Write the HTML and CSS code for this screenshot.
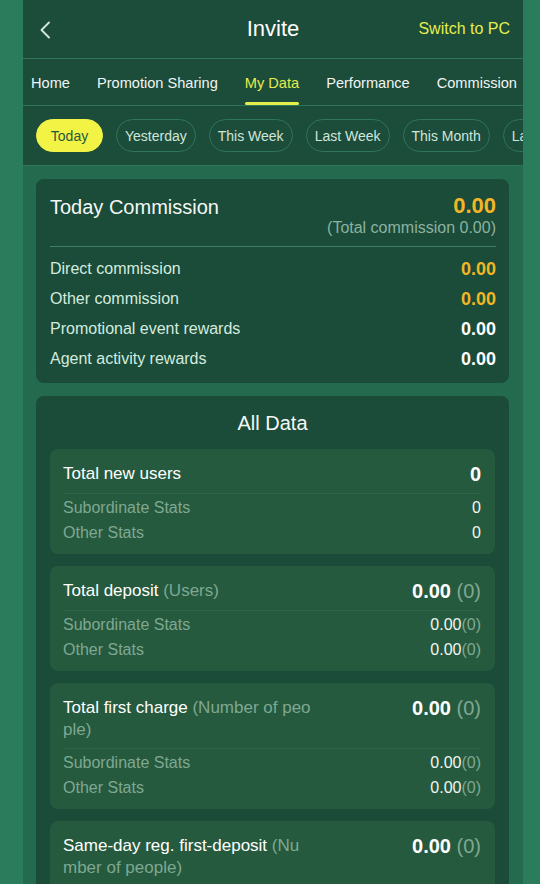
FILE: index.html
```html
<!DOCTYPE html>
<html lang="en">
<head>
<meta charset="utf-8">
<title>Invite</title>
<link rel="stylesheet" href="styles.css">
</head>
<body>
<div class="app">
  <header class="topbar">
    <span class="back">
      <svg width="12" height="18" viewBox="0 0 12 18"><polyline points="10,1.5 2.5,9 10,16.5" fill="none" stroke="#d6e9df" stroke-width="1.8" stroke-linecap="round" stroke-linejoin="round"/></svg>
    </span>
    <h1 class="title">Invite</h1>
    <span class="switch">Switch to PC</span>
  </header>

  <nav class="tabs">
    <span class="tab">Home</span>
    <span class="tab">Promotion Sharing</span>
    <span class="tab active">My Data</span>
    <span class="tab">Performance</span>
    <span class="tab">Commission</span>
  </nav>

  <div class="periods">
    <span class="pill on">Today</span>
    <span class="pill">Yesterday</span>
    <span class="pill">This Week</span>
    <span class="pill">Last Week</span>
    <span class="pill">This Month</span>
    <span class="pill">Last Month</span>
  </div>

  <main class="content">
    <section class="card commission">
      <div class="comm-head">
        <div class="comm-title">Today Commission</div>
        <div class="comm-total">
          <div class="amount gold">0.00</div>
          <div class="total-note">(Total commission 0.00)</div>
        </div>
      </div>
      <div class="comm-rows">
        <div class="comm-row"><span>Direct commission</span><b class="gold">0.00</b></div>
        <div class="comm-row"><span>Other commission</span><b class="gold">0.00</b></div>
        <div class="comm-row"><span>Promotional event rewards</span><b>0.00</b></div>
        <div class="comm-row"><span>Agent activity rewards</span><b>0.00</b></div>
      </div>
    </section>

    <section class="card alldata">
      <h2 class="all-title">All Data</h2>

      <div class="stat">
        <div class="stat-head">
          <div class="stat-name">Total new users</div>
          <div class="stat-val"><b>0</b></div>
        </div>
        <div class="stat-row"><span>Subordinate Stats</span><span class="v">0</span></div>
        <div class="stat-row"><span>Other Stats</span><span class="v">0</span></div>
      </div>

      <div class="stat">
        <div class="stat-head">
          <div class="stat-name">Total deposit <em>(Users)</em></div>
          <div class="stat-val"><b>0.00</b> <em>(0)</em></div>
        </div>
        <div class="stat-row"><span>Subordinate Stats</span><span class="v">0.00<em>(0)</em></span></div>
        <div class="stat-row"><span>Other Stats</span><span class="v">0.00<em>(0)</em></span></div>
      </div>

      <div class="stat">
        <div class="stat-head">
          <div class="stat-name">Total first charge <em>(Number of people)</em></div>
          <div class="stat-val"><b>0.00</b> <em>(0)</em></div>
        </div>
        <div class="stat-row"><span>Subordinate Stats</span><span class="v">0.00<em>(0)</em></span></div>
        <div class="stat-row"><span>Other Stats</span><span class="v">0.00<em>(0)</em></span></div>
      </div>

      <div class="stat">
        <div class="stat-head">
          <div class="stat-name">Same-day reg. first-deposit <em>(Number of people)</em></div>
          <div class="stat-val"><b>0.00</b> <em>(0)</em></div>
        </div>
        <div class="stat-row"><span>Subordinate Stats</span><span class="v">0.00<em>(0)</em></span></div>
        <div class="stat-row"><span>Other Stats</span><span class="v">0.00<em>(0)</em></span></div>
      </div>
    </section>
  </main>
</div>
</body>
</html>
```

FILE: styles.css
```css
* {
  box-sizing: border-box;
}

html, body {
  margin: 0;
  padding: 0;
  height: 100%;
  overflow: hidden;
}

body {
  background: #2b7b5d;
  font-family: "Liberation Sans", Arial, sans-serif;
  color: #d4ebdf;
}

.app {
  width: 500px;
  margin-left: 23px;
  min-height: 100%;
  background: #246a4f;
  overflow: hidden;
}

/* top bar */
.topbar {
  height: 59px;
  background: #1c4c3a;
  border-bottom: 1px solid #2f7658;
  display: flex;
  align-items: center;
  justify-content: space-between;
  padding: 0 13px 0 16px;
  position: relative;
}

.back {
  display: flex;
  width: 12px;
  height: 18px;
  margin-top: 1px;
}

.title {
  position: absolute;
  left: 0;
  right: 0;
  text-align: center;
  margin: 0;
  font-size: 22px;
  font-weight: normal;
  color: #ffffff;
  pointer-events: none;
}

.switch {
  font-size: 16px;
  color: #e4ee4c;
}

/* tab row */
.tabs {
  height: 47px;
  background: #1c4c3a;
  border-bottom: 1px solid #2f7658;
  display: flex;
  align-items: stretch;
  gap: 27px;
  padding-left: 8px;
  white-space: nowrap;
  overflow: hidden;
}

.tab {
  font-size: 14.6px;
  color: #f2f5f3;
  display: flex;
  align-items: center;
  position: relative;
  padding-top: 1px;
}

.tab.active {
  color: #e4ee4c;
}

.tab.active::after {
  content: "";
  position: absolute;
  left: 0;
  right: 0;
  bottom: 0;
  height: 3px;
  border-radius: 2px;
  background: #e4ee4c;
}

/* period pills */
.periods {
  background: #1c4c3a;
  border-bottom: 1px solid #2f7658;
  display: flex;
  gap: 13px;
  padding: 13px 0 13px 13px;
  white-space: nowrap;
  overflow: hidden;
}

.pill {
  flex: none;
  height: 33px;
  min-width: 67px;
  padding: 0 8px;
  border: 1px solid #2f7658;
  border-radius: 17px;
  display: flex;
  align-items: center;
  justify-content: center;
  font-size: 14px;
  color: #cfe6da;
}

.pill.on {
  background: #f3f345;
  border-color: #f3f345;
  color: #1f5a40;
}

/* content */
.content {
  padding: 13px 14px 0 13px;
  display: flex;
  flex-direction: column;
  gap: 13px;
}

.card {
  background: #1b4b39;
  border-radius: 8px;
}

.commission {
  padding: 15px 13px 9px 14px;
}

.comm-head {
  display: flex;
  justify-content: space-between;
  align-items: flex-start;
  padding-bottom: 8px;
  border-bottom: 1px solid #3a8063;
  margin-bottom: 7px;
}

.comm-title {
  font-size: 20px;
  line-height: 26px;
  color: #f4f8f5;
}

.comm-total {
  text-align: right;
}

.amount {
  font-size: 22px;
  line-height: 24px;
  font-weight: bold;
}

.total-note {
  font-size: 16px;
  line-height: 20px;
  color: #8cb3a0;
}

.gold {
  color: #f2b624;
}

.comm-row {
  height: 30px;
  display: flex;
  align-items: center;
  justify-content: space-between;
  font-size: 16px;
  color: #d4ebdf;
}

.comm-row b {
  font-size: 18px;
  color: #ffffff;
}

.comm-row b.gold {
  color: #f2b624;
}

/* all data */
.alldata {
  padding: 15px 14px 20px 14px;
  display: flex;
  flex-direction: column;
  gap: 12px;
}

.all-title {
  margin: 0 0 2px;
  text-align: center;
  font-size: 20px;
  line-height: 24px;
  font-weight: normal;
  color: #f4f8f5;
}

.stat {
  background: #255a3e;
  border-radius: 8px;
  padding: 12px 14px 9px 13px;
}

.stat em {
  font-style: normal;
  color: #7fa892;
}

.stat-head {
  display: flex;
  justify-content: space-between;
  align-items: flex-start;
  padding-bottom: 7px;
  border-bottom: 1px solid #2d6649;
  margin-bottom: 1px;
}

.stat-name {
  width: 249px;
  font-size: 17px;
  line-height: 22px;
  padding-top: 2px;
  color: #ffffff;
  word-break: break-all;
}

.stat-val {
  font-size: 20px;
  line-height: 24px;
  padding-top: 1px;
  white-space: nowrap;
}

.stat-val b {
  color: #ffffff;
}

.stat-row {
  height: 25px;
  display: flex;
  align-items: center;
  justify-content: space-between;
  font-size: 16px;
  color: #7fa892;
}

.stat-row .v {
  color: #f2f5f3;
}
```
